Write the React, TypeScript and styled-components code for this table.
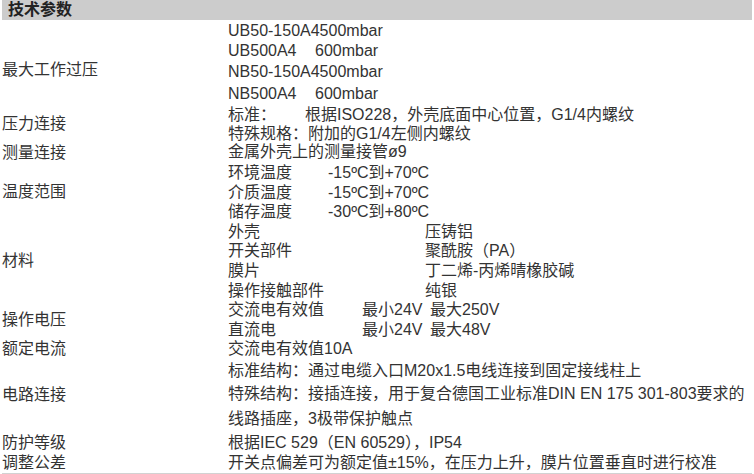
import React from 'react';
import styled, { createGlobalStyle } from 'styled-components';

const GlobalStyle = createGlobalStyle`
  body {
    margin: 0;
    background-color: #ffffff;
  }
`;

type Part = { text: string; w?: number };
type SpecLine = { h: number; parts: Part[] };
type Spec = { label: string; drop?: number; lines: SpecLine[] };

const line = (h: number, ...parts: (string | Part)[]): SpecLine => ({
  h,
  parts: parts.map((p) => (typeof p === 'string' ? { text: p } : p)),
});

const specs: Spec[] = [
  {
    label: '最大工作过压',
    drop: 14,
    lines: [
      line(21, 'UB50-150A4500mbar'),
      line(20, { text: 'UB500A4', w: 87 }, '600mbar'),
      line(22, 'NB50-150A4500mbar'),
      line(22, { text: 'NB500A4', w: 87 }, '600mbar'),
    ],
  },
  {
    label: '压力连接',
    lines: [
      line(19, { text: '标准：', w: 77 }, '根据ISO228，外壳底面中心位置，G1/4内螺纹'),
      line(19, '特殊规格：附加的G1/4左侧内螺纹'),
    ],
  },
  {
    label: '测量连接',
    lines: [line(18, '金属外壳上的测量接管ø9')],
  },
  {
    label: '温度范围',
    lines: [
      line(19.6, { text: '环境温度', w: 100 }, '-15ºC到+70ºC'),
      line(19.6, { text: '介质温度', w: 100 }, '-15ºC到+70ºC'),
      line(19.6, { text: '储存温度', w: 100 }, '-30ºC到+80ºC'),
    ],
  },
  {
    label: '材料',
    lines: [
      line(19.6, { text: '外壳', w: 197 }, '压铸铝'),
      line(19.6, { text: '开关部件', w: 197 }, '聚酰胺（PA）'),
      line(19.6, { text: '膜片', w: 197 }, '丁二烯-丙烯晴橡胶碱'),
      line(19.6, { text: '操作接触部件', w: 197 }, '纯银'),
    ],
  },
  {
    label: '操作电压',
    lines: [
      line(19.6, { text: '交流电有效值', w: 134 }, { text: '最小24V', w: 68 }, '最大250V'),
      line(19.6, { text: '直流电', w: 134 }, { text: '最小24V', w: 68 }, '最大48V'),
    ],
  },
  {
    label: '额定电流',
    lines: [line(20, '交流电有效值10A')],
  },
  {
    label: '电路连接',
    drop: -3,
    lines: [
      line(24, '标准结构：通过电缆入口M20x1.5电线连接到固定接线柱上'),
      line(22, '特殊结构：接插连接，用于复合德国工业标准DIN EN 175 301-803要求的'),
      line(28, '线路插座，3极带保护触点'),
    ],
  },
  {
    label: '防护等级',
    lines: [line(20, '根据IEC 529（EN 60529），IP54')],
  },
  {
    label: '调整公差',
    lines: [line(20, '开关点偏差可为额定值±15%，在压力上升，膜片位置垂直时进行校准')],
  },
];

export default function App() {
  return (
    <>
      <GlobalStyle />
      <Sheet>
        <Title>技术参数</Title>
        <Table>
          {specs.map((spec) => (
            <Row key={spec.label}>
              <Label $drop={spec.drop ?? 0}>{spec.label}</Label>
              <Value>
                {spec.lines.map((l, i) => (
                  <Line key={i} $h={l.h}>
                    {l.parts.map((p, j) => (
                      <Cell key={j} $w={p.w}>
                        {p.text}
                      </Cell>
                    ))}
                  </Line>
                ))}
              </Value>
            </Row>
          ))}
        </Table>
      </Sheet>
    </>
  );
}

const Sheet = styled.div`
  width: 750px;
  padding-left: 2px;
  font-family: 'Liberation Sans', 'Noto Sans CJK SC', sans-serif;
  font-size: 16px;
  color: #333333;
`;

const Title = styled.div`
  height: 20px;
  line-height: 20px;
  padding-left: 6px;
  background-color: #cccccc;
  font-weight: bold;
  color: #222222;
`;

const Table = styled.div`
  display: flex;
  flex-direction: column;
  border-bottom: 2px solid #d2d2d2;
`;

const Row = styled.div`
  display: grid;
  grid-template-columns: 226px 1fr;
`;

interface LabelProps {
  $drop: number;
}

const Label = styled.div<LabelProps>`
  align-self: center;
  line-height: 20px;
  white-space: nowrap;
  padding-top: ${({ $drop }) => Math.max($drop, 0)}px;
  padding-bottom: ${({ $drop }) => Math.max(-$drop, 0)}px;
`;

const Value = styled.div`
  display: flex;
  flex-direction: column;
`;

interface LineProps {
  $h: number;
}

const Line = styled.div<LineProps>`
  display: flex;
  height: ${({ $h }) => $h}px;
  line-height: ${({ $h }) => $h}px;
  white-space: nowrap;
`;

interface CellProps {
  $w?: number;
}

const Cell = styled.span<CellProps>`
  display: inline-block;
  flex: none;
  width: ${({ $w }) => ($w ? `${$w}px` : 'auto')};
`;
